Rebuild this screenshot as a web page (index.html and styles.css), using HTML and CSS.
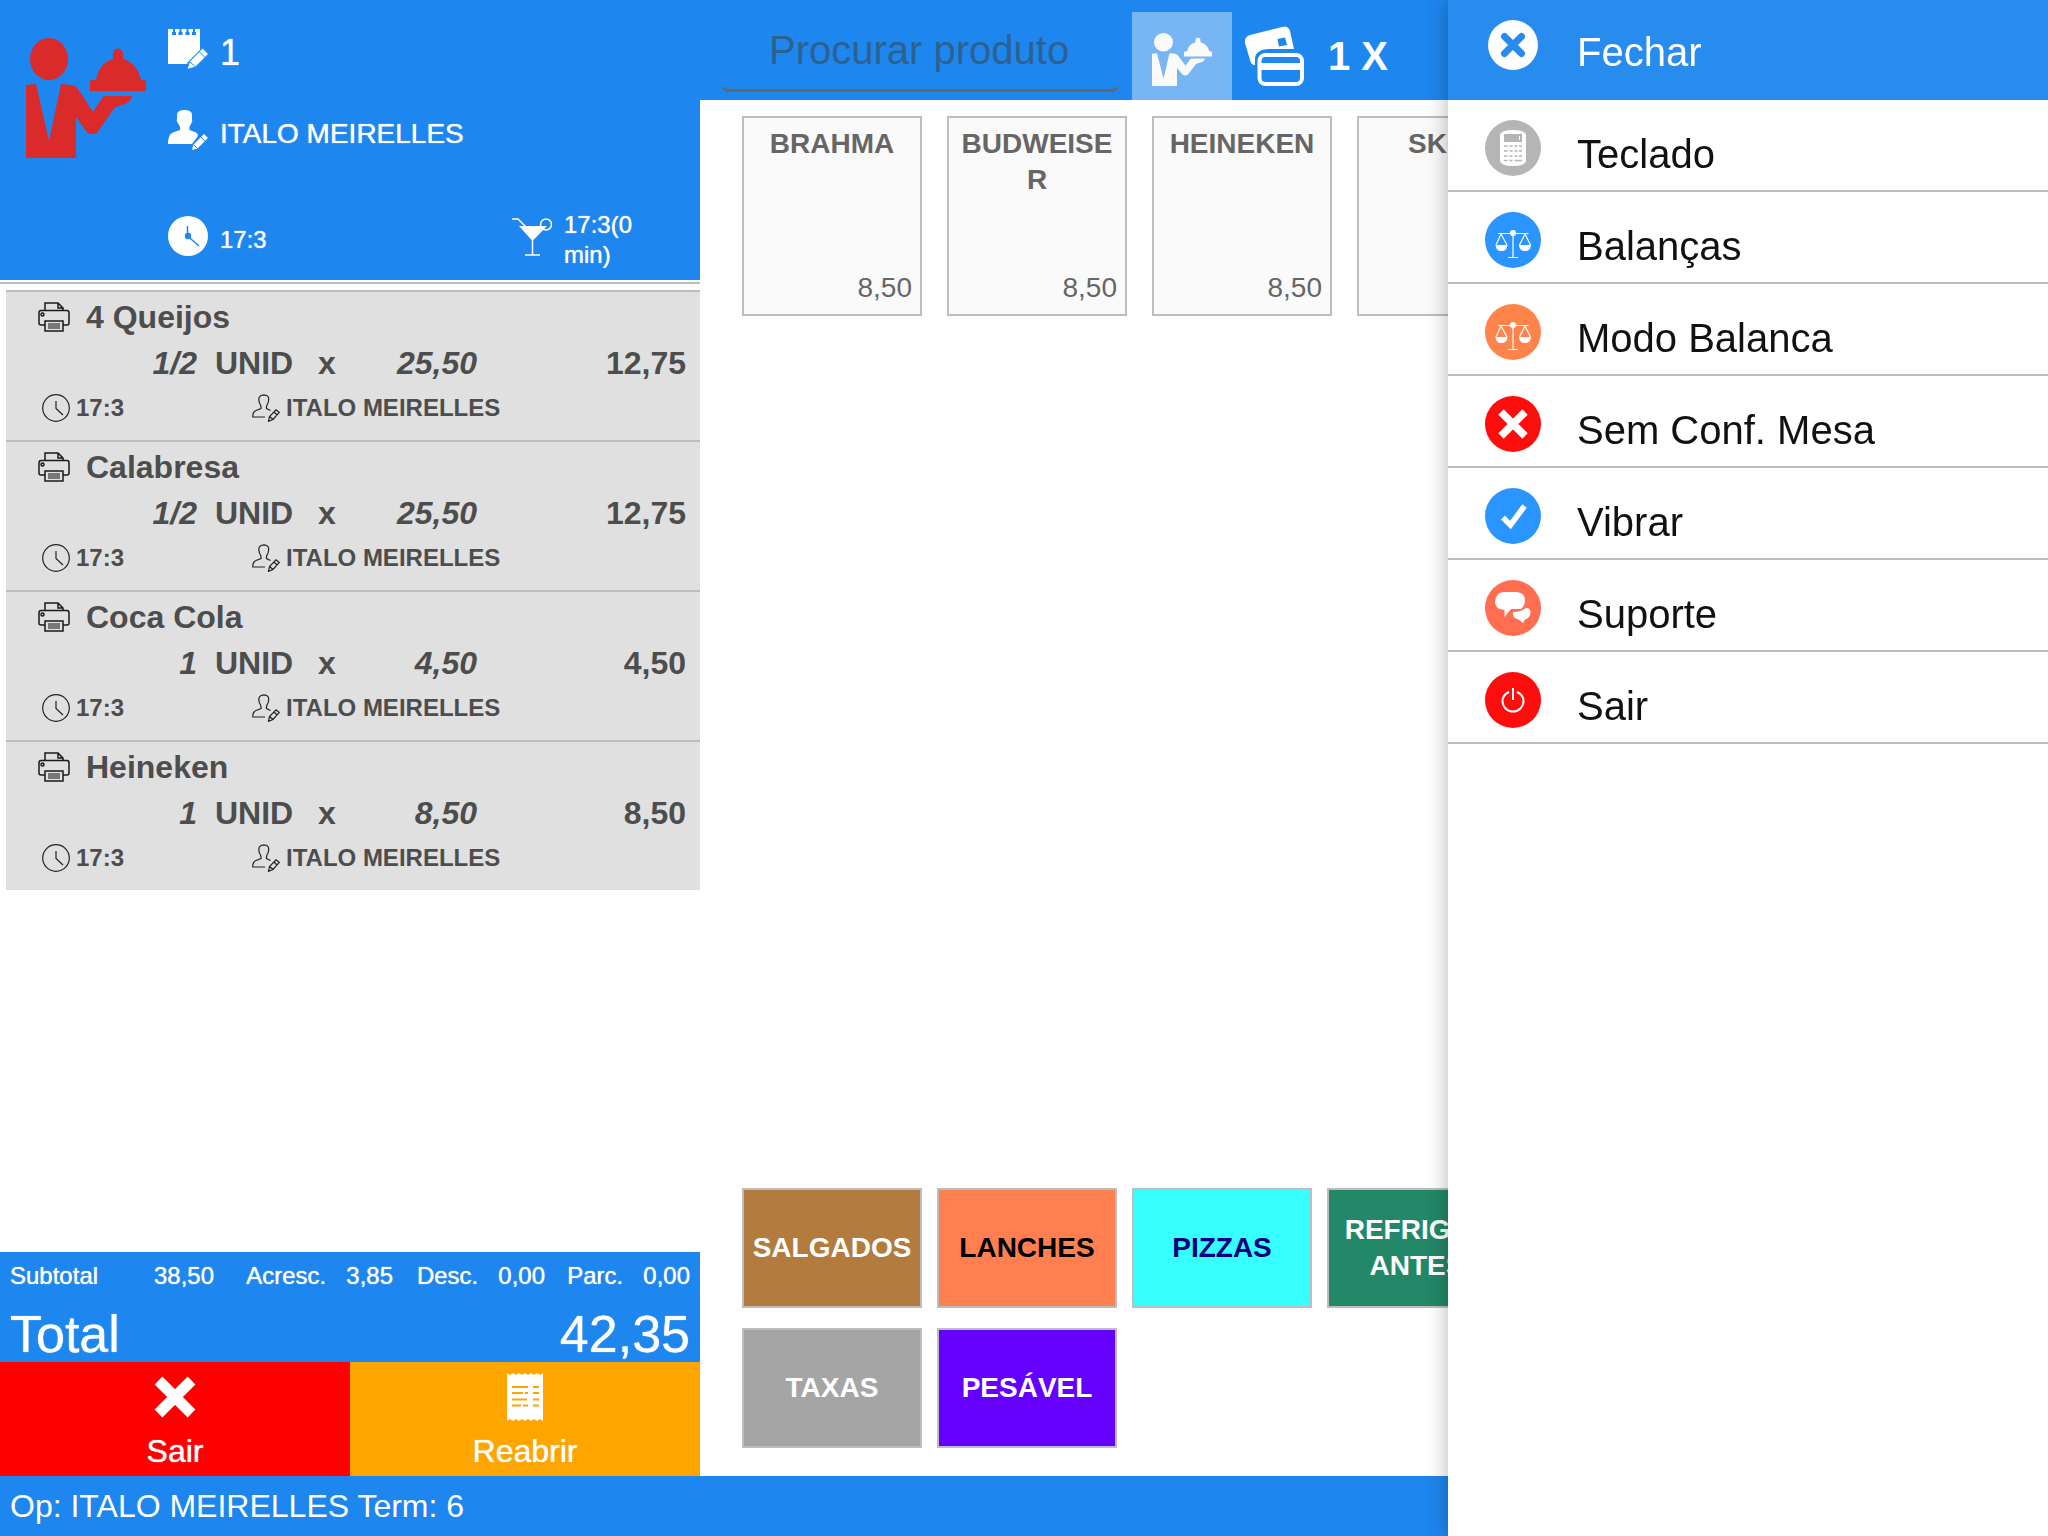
FILE: index.html
```html
<!DOCTYPE html>
<html lang="pt-BR">
<head>
<meta charset="utf-8">
<meta name="viewport" content="width=device-width, initial-scale=1">
<title>Comanda 1</title>
<link rel="stylesheet" href="styles.css">
</head>
<body>
<svg class="sprite" aria-hidden="true">
  <symbol id="waiter" viewBox="0 0 120 120" preserveAspectRatio="none">
    <ellipse cx="23" cy="21" rx="19" ry="21"/>
    <path d="M0 47 10 46 23 103 35 46 46 47Q50 48 52 51L67 74 76 60Q77 58 80 58H106Q105 64 99 66L90 69Q88 70 87 72L73 92Q71 96 66 96 62 96 60 93L50 79V120H0Z"/>
    <path d="M64 44Q64 42 66 42H70Q73 25 87 21 86 10 92 10.500 98 10 97 21 111 25 115 42H118Q120 42 120 44V53H64Z"/>
  </symbol>
  <symbol id="printer" viewBox="0 0 32 30">
    <g fill="none" stroke="#1a1a1a" stroke-width="1.500">
      <path d="M7 8V1H20L25 6V8M20 1V6H25"/>
      <path d="M7 23H3Q1 23 1 21V11Q1 8.500 3 8.500H29Q31 8.500 31 11V21Q31 23 29 23H25"/>
      <path d="M7 19H25V29H7Z"/>
      <circle cx="4.500" cy="12.500" r="1.500"/>
    </g>
    <path d="M10 21H22V27H10Z" fill="#777"/>
  </symbol>
  <symbol id="clock-line" viewBox="0 0 28 28">
    <g fill="none" stroke="#222" stroke-width="1.200">
      <circle cx="14" cy="14" r="13.300"/>
      <path d="M14 7V14.500L21 21"/>
    </g>
  </symbol>
  <symbol id="user-line" viewBox="0 0 28 28">
    <g fill="none" stroke="#222" stroke-width="1.200">
      <path d="M13 23H.800Q.500 18 4 16.500L9 14.500Q9.500 12 7.500 9 5 1 12 .800 18.500 1 16 9 14 12 14.500 14.500L18.500 16.500"/>
      <path d="M16.500 27.300 17.500 22.500 24 15.800 27.300 18.500 21 25.500ZM22 18 25 21M17.500 22.500 21 25.500"/>
    </g>
  </symbol>
  <symbol id="scales" viewBox="0 0 56 56">
    <circle cx="28" cy="21" r="3" fill="#fff"/>
    <path d="M10.500 33H22.500Q22 39 16.500 39T10.500 33ZM34 33H46Q45.500 39 40 39T34 33Z" fill="#fff"/>
    <path d="M13 21.500H43.500M28 21V45M23 45.500H33M16 22 11 33M16 22 22 33M40 22 34.500 33M40 22 45.500 33" fill="none" stroke="#fff" stroke-width="1.200"/>
  </symbol>
</svg>

<div class="app">
  <div class="workspace">
    <section class="order">
      <header class="order-head">
        <svg class="logo" aria-hidden="true"><use href="#waiter"/></svg>
        <div class="order-info">
          <div class="info">
            <svg class="icon-40" viewBox="0 0 40 40" aria-hidden="true">
              <path fill="#fff" d="M0 0H32V21L20 33 19 35H0Z"/>
              <path fill="#1e86ef" d="M4 3H5V0H7V3H8V6H4ZM10.500 3H11.500V0H13.500V3H14.500V6H10.500ZM17.500 3H18.500V0H20.500V3H21.500V6H17.500ZM24 3H25V0H27V3H28V6H24Z"/>
              <path fill="#fff" stroke="#1e86ef" stroke-width="1" d="M19 40.500 21.500 32.500 34.500 19 40.500 25 27.500 38ZM31 22.500 37 28.500M21.500 32.500 27.500 38"/>
            </svg>
            <span class="info-text table-number">1</span>
          </div>
          <div class="info">
            <svg class="icon-40" viewBox="0 0 40 40" aria-hidden="true">
              <path fill="#fff" d="M0 34Q0 24 5 22.500L12 20Q13 17 10.500 14 8 11 9 9V4Q10 0 16.500 0 23 0 24 4V9Q25 11 23 14 20.500 17 21.500 20L28 22.500Q30 23.500 30 26L24 34Z"/>
              <path fill="#fff" d="M24 40 25.500 34.500 36 24 40 28 29.500 38.500Z"/>
              <path fill="none" stroke="#1e86ef" d="M33 27 37 31M25.500 34.500 29.500 38.500"/>
            </svg>
            <span class="info-text waiter-name">ITALO MEIRELLES</span>
          </div>
          <div class="times">
            <div class="info">
              <svg class="icon-40" viewBox="0 0 40 40" aria-hidden="true">
                <circle cx="20" cy="20" r="20" fill="#fff"/>
                <circle cx="20" cy="20" r="3.200" fill="#1e86ef"/>
                <path d="M19.500 10V20L31 30" fill="none" stroke="#1e86ef" stroke-width="1.500"/>
              </svg>
              <span class="info-text">17:3</span>
            </div>
            <div class="info">
              <svg class="icon-40" viewBox="0 0 40 40" aria-hidden="true">
                <g fill="none" stroke="#fff" stroke-width="1.500">
                  <path d="M0 3H6L14 11M20.500 20V39M13 39H28"/>
                  <circle cx="34" cy="8.500" r="5.500"/>
                </g>
                <path d="M7 10H35L20.500 25Z" fill="#fff"/>
              </svg>
              <span class="info-text">17:3(0 min)</span>
            </div>
          </div>
        </div>
      </header>

      <ul class="items">
        <li class="item">
          <div class="item-title"><svg class="printer" aria-hidden="true"><use href="#printer"/></svg>4 Queijos</div>
          <div class="item-values"><i class="qty">1/2</i><span>UNID</span><span>x</span><i class="price">25,50</i><span class="amount">12,75</span></div>
          <div class="item-meta">
            <span><svg class="icon-28" aria-hidden="true"><use href="#clock-line"/></svg>17:3</span>
            <span><svg class="icon-28" aria-hidden="true"><use href="#user-line"/></svg>ITALO MEIRELLES</span>
          </div>
        </li>
        <li class="item">
          <div class="item-title"><svg class="printer" aria-hidden="true"><use href="#printer"/></svg>Calabresa</div>
          <div class="item-values"><i class="qty">1/2</i><span>UNID</span><span>x</span><i class="price">25,50</i><span class="amount">12,75</span></div>
          <div class="item-meta">
            <span><svg class="icon-28" aria-hidden="true"><use href="#clock-line"/></svg>17:3</span>
            <span><svg class="icon-28" aria-hidden="true"><use href="#user-line"/></svg>ITALO MEIRELLES</span>
          </div>
        </li>
        <li class="item">
          <div class="item-title"><svg class="printer" aria-hidden="true"><use href="#printer"/></svg>Coca Cola</div>
          <div class="item-values"><i class="qty">1</i><span>UNID</span><span>x</span><i class="price">4,50</i><span class="amount">4,50</span></div>
          <div class="item-meta">
            <span><svg class="icon-28" aria-hidden="true"><use href="#clock-line"/></svg>17:3</span>
            <span><svg class="icon-28" aria-hidden="true"><use href="#user-line"/></svg>ITALO MEIRELLES</span>
          </div>
        </li>
        <li class="item">
          <div class="item-title"><svg class="printer" aria-hidden="true"><use href="#printer"/></svg>Heineken</div>
          <div class="item-values"><i class="qty">1</i><span>UNID</span><span>x</span><i class="price">8,50</i><span class="amount">8,50</span></div>
          <div class="item-meta">
            <span><svg class="icon-28" aria-hidden="true"><use href="#clock-line"/></svg>17:3</span>
            <span><svg class="icon-28" aria-hidden="true"><use href="#user-line"/></svg>ITALO MEIRELLES</span>
          </div>
        </li>
      </ul>

      <div class="totals">
        <div class="subtotals">
          <div class="sum sum-wide"><span>Subtotal</span><span>38,50</span></div>
          <div class="sum"><span>Acresc.</span><span>3,85</span></div>
          <div class="sum"><span>Desc.</span><span>0,00</span></div>
          <div class="sum"><span>Parc.</span><span>0,00</span></div>
        </div>
        <div class="grand-total"><span>Total</span><span>42,35</span></div>
      </div>

      <div class="actions">
        <button class="action action-exit" type="button">
          <svg class="icon-48" viewBox="0 0 48 48" aria-hidden="true"><path d="M7.500 7.500 40.500 40.500M40.500 7.500 7.500 40.500" stroke="#fff" stroke-width="11"/></svg>
          Sair
        </button>
        <button class="action action-reopen" type="button">
          <svg class="icon-48" viewBox="0 0 48 48" aria-hidden="true">
            <path fill="#fff" d="M6 0 9 2 12 0 15 2 18 0 21 2 24 0 27 2 30 0 33 2 36 0 39 2 42 0V48L39 46 36 48 33 46 30 48 27 46 24 48 21 46 18 48 15 46 12 48 9 46 6 48Z"/>
            <path fill="none" stroke="#ffa500" stroke-width="2.200" d="M11 14H27M11 20H22M24 20H27M11 26.500H26M11 32.500H20M22 32.500H27M32 14H38M32 20H38M32 26.500H38M32 32.500H38"/>
          </svg>
          Reabrir
        </button>
      </div>
    </section>

    <main class="catalog">
      <header class="toolbar">
        <input class="search" type="search" placeholder="Procurar produto" aria-label="Procurar produto">
        <button class="tab" type="button" aria-label="Mesas">
          <svg class="icon-60" viewBox="0 0 60 60" aria-hidden="true"><use href="#waiter" x="0" y="7" width="60" height="53"/></svg>
        </button>
        <button class="cards" type="button" aria-label="Comandas">
          <svg class="icon-60" viewBox="0 0 60 60" aria-hidden="true">
            <path fill="#fff" fill-rule="evenodd" d="M1 17Q0 11 6 9L38 1Q44-1 46 5L50 23H24Q11 24 11 33V39Q7 39 6 34ZM33.500 13 35 20.500 43 19 41 11.500Z"/>
            <rect x="15.500" y="29" width="42.500" height="29" rx="6" fill="none" stroke="#fff" stroke-width="4"/>
            <path fill="#fff" d="M15 37H58V44H15Z"/>
          </svg>
        </button>
        <span class="multiplier">1 X</span>
      </header>

      <div class="products">
        <button class="product" type="button"><span>BRAHMA</span><span class="product-price">8,50</span></button>
        <button class="product" type="button"><span>BUDWEISER</span><span class="product-price">8,50</span></button>
        <button class="product" type="button"><span>HEINEKEN</span><span class="product-price">8,50</span></button>
        <button class="product" type="button"><span>SKOL</span><span class="product-price">8,50</span></button>
      </div>

      <div class="categories">
        <div class="category-row">
          <button class="category brown" type="button">SALGADOS</button>
          <button class="category coral" type="button">LANCHES</button>
          <button class="category cyan" type="button">PIZZAS</button>
          <button class="category green" type="button">REFRIGERANTES</button>
        </div>
        <div class="category-row">
          <button class="category gray" type="button">TAXAS</button>
          <button class="category violet" type="button">PESÁVEL</button>
        </div>
      </div>
    </main>
  </div>
  <footer class="status">Op: ITALO MEIRELLES Term: 6</footer>
</div>

<nav class="drawer">
  <button class="drawer-close" type="button">
    <svg class="icon-56" viewBox="0 0 56 56" aria-hidden="true"><circle cx="28" cy="25" r="25" fill="#fff"/><path d="M19.500 16.500 36.500 33.500M36.500 16.500 19.500 33.500" stroke="#288bee" stroke-width="7" stroke-linecap="round"/></svg>
    <span class="drawer-label">Fechar</span>
  </button>
  <button class="drawer-item" type="button">
    <svg class="icon-56" viewBox="0 0 56 56" aria-hidden="true"><circle cx="28" cy="28" r="28" fill="#b5b5b5"/><path fill="#fff" d="M15 15Q16 10 28 10T41 15V41Q40 46 28 46T15 41Z"/><path fill="#b5b5b5" d="M19 14H37V22H19Z"/><path stroke="#fff" d="M34.500 16V20"/><path stroke="#b5b5b5" stroke-width="1.400" d="M19 26H22.500M24.500 26H27.500M29.500 26H32.500M34 26H37M19 31H22.500M24.500 31H27.500M29.500 31H32.500M34 31H37M19 36H22.500M24.500 36H27.500M29.500 36H32.500M34 36H37M19 40.500H22.500M24.500 40.500H27.500M29.500 40.500H37"/></svg>
    <span class="drawer-label">Teclado</span>
  </button>
  <button class="drawer-item" type="button">
    <svg class="icon-56" viewBox="0 0 56 56" aria-hidden="true"><circle cx="28" cy="28" r="28" fill="#2b95ff"/><use href="#scales"/></svg>
    <span class="drawer-label">Balanças</span>
  </button>
  <button class="drawer-item" type="button">
    <svg class="icon-56" viewBox="0 0 56 56" aria-hidden="true"><circle cx="28" cy="28" r="28" fill="#ff844b"/><use href="#scales"/></svg>
    <span class="drawer-label">Modo Balanca</span>
  </button>
  <button class="drawer-item" type="button">
    <svg class="icon-56" viewBox="0 0 56 56" aria-hidden="true"><circle cx="28" cy="28" r="28" fill="#ff0d0d"/><path d="M16 16 40 40M40 16 16 40" stroke="#fff" stroke-width="7.500"/></svg>
    <span class="drawer-label">Sem Conf. Mesa</span>
  </button>
  <button class="drawer-item" type="button">
    <svg class="icon-56" viewBox="0 0 56 56" aria-hidden="true"><circle cx="28" cy="28" r="28" fill="#2b95ff"/><path d="M18 29.500 25.500 37 39.500 18" fill="none" stroke="#fff" stroke-width="5.500"/></svg>
    <span class="drawer-label">Vibrar</span>
  </button>
  <button class="drawer-item" type="button">
    <svg class="icon-56" viewBox="0 0 56 56" aria-hidden="true"><circle cx="28" cy="28" r="28" fill="#ff6e51"/><path fill="#fff" d="M18 12H32Q40 13 40 20 40 26 36 29H26L19.500 37V30Q10 29 10 22 11 13 18 12ZM28 32Q36 32 41 28 46 28 45.500 33 45 38 40 39.500L38 43 33.500 39.500Q27 38 28 32Z"/></svg>
    <span class="drawer-label">Suporte</span>
  </button>
  <button class="drawer-item" type="button">
    <svg class="icon-56" viewBox="0 0 56 56" aria-hidden="true"><circle cx="28" cy="28" r="28" fill="#ff0d0d"/><path d="M24 20Q17.500 23 17.500 29A10.500 10.500 0 0 0 38.500 29Q38.500 23 32 20M28 16V28" fill="none" stroke="#fff" stroke-width="2"/></svg>
    <span class="drawer-label">Sair</span>
  </button>
</nav>
</body>
</html>
```
FILE: styles.css
```css
* {
  box-sizing: border-box;
}

body {
  margin: 0;
  background: #fff;
  font-family: "Liberation Sans", Arial, sans-serif;
  overflow-x: hidden;
}

button,
input {
  margin: 0;
  padding: 0;
  border: 0;
  background: none;
  color: inherit;
  font: inherit;
}

svg {
  display: block;
  flex: none;
}

.sprite {
  display: none;
}

.icon-28 { width: 28px; height: 28px; }
.icon-40 { width: 40px; height: 40px; }
.icon-48 { width: 48px; height: 48px; }
.icon-56 { width: 56px; height: 56px; }
.icon-60 { width: 60px; height: 60px; }

.app {
  display: flex;
  flex-direction: column;
  min-height: 100vh;
}

.workspace {
  flex: 1;
  display: grid;
  grid-template-columns: 175fr 337fr;
}

/* Order column */
.order {
  display: flex;
  flex-direction: column;
  min-width: 0;
}

.order-head,
.totals,
.action {
  text-shadow: 0 0 1px #fff;
}

.order-head {
  display: grid;
  grid-template-columns: 120px 1fr;
  column-gap: 22px;
  height: 280px;
  padding-left: 26px;
  background: #1e86ef;
  color: #fff;
}

.logo {
  width: 120px;
  height: 120px;
  margin-top: 38px;
  fill: #db2a2a;
}

.order-info {
  display: grid;
  grid-template-rows: 98px 64px 1fr;
}

.info {
  display: flex;
  align-items: center;
  gap: 12px;
}

.info-text {
  padding-top: 8px;
  font-size: 24px;
  line-height: 30px;
}

.table-number {
  font-size: 36px;
}

.waiter-name {
  font-size: 28px;
}

.times {
  display: grid;
  grid-template-columns: 344fr 188fr;
  align-items: end;
  padding-bottom: 10px;
}

.times .info {
  min-height: 68px;
  padding-right: 24px;
}

.items {
  flex: 1;
  margin: 2px 0 0;
  padding: 6px 0 0 6px;
  border-top: 2px solid #bdbdbd;
  list-style: none;
}

.item {
  height: 150px;
  padding: 2px 14px 0 0;
  border-top: 2px solid #bdbdbd;
  background: #e0e0e0;
  color: #4d4d4d;
  font-size: 32px;
  font-weight: bold;
  line-height: 46px;
}

.item-title {
  display: flex;
  align-items: center;
  gap: 16px;
  padding-left: 32px;
}

.printer {
  width: 32px;
  height: 30px;
}

.item-values {
  display: grid;
  grid-template-columns: 191fr 18fr 103fr 50fr 109fr 209fr;
}

.item-values .qty {
  grid-column: 1;
  text-align: right;
}

.item-values .qty + span {
  grid-column: 3;
}

.item-values .price,
.item-values .amount {
  text-align: right;
}

.item-meta {
  display: grid;
  grid-template-columns: 210fr 434fr;
  padding-left: 36px;
  font-size: 24px;
  line-height: 44px;
}

.item-meta span {
  display: flex;
  align-items: center;
  gap: 6px;
}

.totals {
  padding: 0 10px;
  background: #1e86ef;
  color: #fff;
}

.subtotals {
  display: grid;
  grid-template-columns: 204fr 179fr 152fr 145fr;
  font-size: 24px;
  line-height: 48px;
}

.sum {
  display: flex;
  justify-content: flex-end;
  gap: 20px;
}

.sum-wide {
  justify-content: space-between;
}

.grand-total {
  display: flex;
  justify-content: space-between;
  padding-top: 6px;
  font-size: 52px;
  line-height: 56px;
}

.actions {
  display: grid;
  grid-template-columns: 1fr 1fr;
}

.action {
  display: flex;
  flex-direction: column;
  align-items: center;
  gap: 12px;
  height: 114px;
  padding-top: 11px;
  color: #fff;
  font-size: 32px;
  line-height: 36px;
}

.action-exit { background: #f00; }
.action-reopen { background: #ffa500; }

/* Catalog column */
.catalog {
  display: flex;
  flex-direction: column;
  min-width: 0;
  overflow: hidden;
}

.toolbar {
  display: flex;
  align-items: center;
  height: 100px;
  padding: 12px 0 0 21px;
  background: #1e86ef;
  color: #fff;
}

.search {
  flex: 0 1 398px;
  align-self: flex-end;
  min-width: 0;
  height: 84px;
  margin: 0 13px 8px 0;
  padding: 4px 16px 0 48px;
  border-bottom: 3px solid #666;
  border-radius: 8px;
  outline: none;
  appearance: none;
  font-size: 40px;
}

.search::placeholder {
  color: #2d618f;
  opacity: 1;
}

.tab {
  display: grid;
  place-items: center;
  width: 100px;
  height: 88px;
  background: #78b5f4;
  fill: #fafafa;
}

.cards {
  padding: 0 24px 0 12px;
}

.multiplier {
  font-size: 40px;
  font-weight: bold;
}

.products {
  flex: 1;
  display: flex;
  align-items: flex-start;
  gap: 25px;
  padding: 16px 0 0 42px;
}

.product {
  flex: none;
  display: flex;
  flex-direction: column;
  justify-content: space-between;
  width: 180px;
  height: 200px;
  padding: 8px;
  border: 2px solid #bdbdbd;
  background: #fafafa;
  color: #666;
  font-size: 28px;
  font-weight: bold;
  line-height: 36px;
  text-align: center;
  overflow-wrap: anywhere;
}

.product span {
  padding: 0 4px;
}

.product .product-price {
  padding: 0;
  font-weight: normal;
  text-align: right;
}

.categories {
  display: flex;
  flex-direction: column;
  gap: 20px;
  padding: 0 0 28px 42px;
}

.category-row {
  display: flex;
  gap: 15px;
}

.category {
  flex: none;
  width: 180px;
  height: 120px;
  padding: 0 8px;
  border: 2px solid #bdbdbd;
  color: #fff;
  font-size: 28px;
  font-weight: bold;
  line-height: 36px;
  overflow-wrap: anywhere;
}

.brown { background: #b47b3e; }
.coral { background: #ff7f50; color: #000; }
.cyan { background: #38ffff; color: #000080; }
.green { background: #238868; }
.gray { background: #a5a5a5; }
.violet { background: #6500ff; }

.status {
  height: 60px;
  padding-left: 10px;
  background: #1e86ef;
  color: #fff;
  font-size: 32px;
  line-height: 60px;
}

.drawer {
  position: fixed;
  top: 0;
  right: 0;
  bottom: 0;
  display: flex;
  flex-direction: column;
  width: 600px;
  max-width: 100%;
  background: #fff;
  box-shadow: 0 0 20px rgba(0, 0, 0, 0.3);
  color: #111;
  font-size: 40px;
  line-height: 44px;
}

.drawer-close,
.drawer-item {
  display: flex;
  align-items: flex-start;
  gap: 36px;
  height: 92px;
  padding: 20px 0 0 37px;
  border-bottom: 2px solid #bdbdbd;
  text-align: left;
}

.drawer-close {
  height: 100px;
  border-bottom: 0;
  background: #288bee;
  color: #fff;
}

.drawer-label {
  padding-top: 12px;
}

.drawer-close .drawer-label {
  padding-top: 10px;
}
```
